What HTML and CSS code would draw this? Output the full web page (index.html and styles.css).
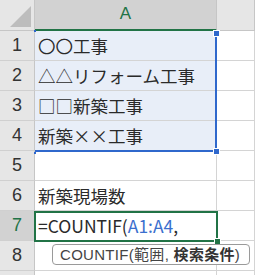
FILE: index.html
```html
<!DOCTYPE html>
<html lang="ja">
<head>
  <meta charset="UTF-8" />
  <title>COUNTIF</title>
  <link rel="stylesheet" href="styles.css">
</head>
<body>
  <div class="sheet">
    <div class="corner"><span class="tri"></span></div>
    <div class="col-head active">A</div>
    <div class="col-head"></div>

    <div class="row-head">1</div>
    <div class="cell sel">〇〇工事</div>
    <div class="cell"></div>

    <div class="row-head">2</div>
    <div class="cell sel">△△リフォーム工事</div>
    <div class="cell"></div>

    <div class="row-head">3</div>
    <div class="cell sel">□□新築工事</div>
    <div class="cell"></div>

    <div class="row-head">4</div>
    <div class="cell sel">新築××工事</div>
    <div class="cell"></div>

    <div class="row-head">5</div>
    <div class="cell"></div>
    <div class="cell"></div>

    <div class="row-head">6</div>
    <div class="cell">新築現場数</div>
    <div class="cell"></div>

    <div class="row-head current">7</div>
    <div class="cell">=COUNTIF(<span class="ref">A1:A4</span>,</div>
    <div class="cell"></div>

    <div class="row-head">8</div>
    <div class="cell"></div>
    <div class="cell"></div>

    <div class="row-head"></div>
    <div class="cell"></div>
    <div class="cell"></div>

    <!-- overlays -->
    <div class="range-box">
      <span class="h h-tl"></span>
      <span class="h h-tr"></span>
      <span class="h h-bl"></span>
      <span class="h h-br"></span>
    </div>
    <div class="active-box"><span class="fill-handle"></span></div>
    <div class="tip">COUNTIF(範囲, <b>検索条件</b>)</div>
  </div>
</body>
</html>
```

FILE: styles.css
```css
body {
  margin: 0;
  background-color: #fff;
  font-family: 'Noto Sans CJK JP', 'Noto Sans', sans-serif;
  color: #222;
}
.sheet {
  position: relative;
  display: grid;
  grid-template-columns: 35px 182px 38px;
  grid-template-rows: 31px repeat(9, 30px);
  height: 275px;
  overflow: hidden;
}
.corner {
  position: relative;
  background-color: #e6e6e6;
  border-right: 1px solid #c6c6c6;
  border-bottom: 1px solid #c6c6c6;
}
.tri {
  position: absolute;
  right: 3px;
  bottom: 3px;
  width: 0;
  height: 0;
  border-left: 21px solid transparent;
  border-bottom: 21px solid #bdbdbd;
}
.col-head {
  background-color: #e6e6e6;
  border-right: 1px solid #c6c6c6;
  border-bottom: 1px solid #c6c6c6;
  text-align: center;
  font-family: 'Liberation Sans', sans-serif;
  font-size: 17px;
  line-height: 28px;
  color: #444;
}
.col-head.active {
  background-color: #d2d2d2;
  color: #217346;
  border-bottom: 2px solid #217346;
}
.row-head {
  background-color: #e6e6e6;
  border-right: 1px solid #c6c6c6;
  border-bottom: 1px solid #d0d0d0;
  text-align: center;
  font-family: 'Liberation Sans', sans-serif;
  font-size: 18px;
  line-height: 29px;
  color: #333;
}
.row-head.current {
  background-color: #d2d2d2;
  color: #217346;
}
.cell {
  border-right: 1px solid #d4d4d4;
  border-bottom: 1px solid #d4d4d4;
  padding-left: 3px;
  font-size: 17.5px;
  line-height: 29px;
  white-space: nowrap;
  color: #2a2a2a;
}
.cell.sel {
  background-color: #e8eef8;
}
.ref {
  color: #3b6fce;
}
.range-box {
  position: absolute;
  left: 35px;
  top: 31px;
  width: 180px;
  height: 119px;
  border-right: 2px solid #2f68cc;
  border-bottom: 2px solid #2f68cc;
}
.h {
  position: absolute;
  width: 5px;
  height: 5px;
  background-color: #2f68cc;
  border: 1px solid #fff;
}
.h-tl { left: -1px; top: -1px; width: 2px; height: 2px; border: 0; }
.h-tr { right: -5px; top: -1px; }
.h-bl { left: -1px; bottom: -4px; width: 2px; height: 2px; border: 0; }
.h-br { right: -5px; bottom: -5px; }
.active-box {
  position: absolute;
  left: 34px;
  top: 211px;
  width: 180px;
  height: 27px;
  border: 2px solid #217346;
}
.fill-handle {
  position: absolute;
  right: -5px;
  bottom: -5px;
  width: 5px;
  height: 5px;
  background-color: #217346;
  border: 1px solid #fff;
}
.tip {
  position: absolute;
  left: 52px;
  top: 244px;
  height: 19px;
  padding: 0 9px 0 7px;
  background-color: #fff;
  border: 1px solid #9a9a9a;
  border-radius: 4px;
  font-family: 'Liberation Sans', 'Noto Sans CJK JP', sans-serif;
  font-size: 15px;
  letter-spacing: 0.3px;
  line-height: 19px;
  color: #444;
  white-space: nowrap;
}
.tip b {
  font-weight: bold;
  color: #333;
}
```
